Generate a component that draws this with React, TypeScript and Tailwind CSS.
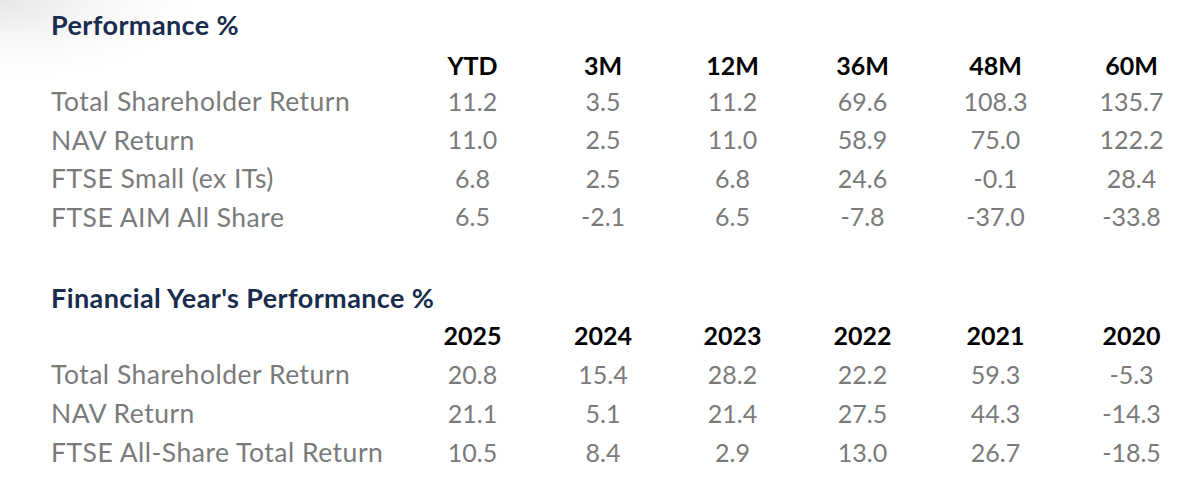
const COLS = "grid grid-cols-[356px_131px_130px_129px_131px_135px_137px] items-center";

type Section = {
  title: string;
  headers: string[];
  rows: [string, string[]][];
};

const PERFORMANCE: Section = {
  title: "Performance %",
  headers: ["YTD", "3M", "12M", "36M", "48M", "60M"],
  rows: [
    ["Total Shareholder Return", ["11.2", "3.5", "11.2", "69.6", "108.3", "135.7"]],
    ["NAV Return", ["11.0", "2.5", "11.0", "58.9", "75.0", "122.2"]],
    ["FTSE Small (ex ITs)", ["6.8", "2.5", "6.8", "24.6", "-0.1", "28.4"]],
    ["FTSE AIM All Share", ["6.5", "-2.1", "6.5", "-7.8", "-37.0", "-33.8"]],
  ],
};

const FINANCIAL_YEARS: Section = {
  title: "Financial Year's Performance %",
  headers: ["2025", "2024", "2023", "2022", "2021", "2020"],
  rows: [
    ["Total Shareholder Return", ["20.8", "15.4", "28.2", "22.2", "59.3", "-5.3"]],
    ["NAV Return", ["21.1", "5.1", "21.4", "27.5", "44.3", "-14.3"]],
    ["FTSE All-Share Total Return", ["10.5", "8.4", "2.9", "13.0", "26.7", "-18.5"]],
  ],
};

function PerfTable({
  section,
  titleClass,
  headerClass,
  rowClass,
}: {
  section: Section;
  titleClass: string;
  headerClass: string;
  rowClass: string;
}) {
  return (
    <div className="flex flex-col">
      {/* Section title */}
      <div
        className={`flex items-center text-[27px] font-bold leading-none tracking-[0.4px] text-[#1a2c4e] ${titleClass}`}
      >
        {section.title}
      </div>

      {/* Column headers */}
      <div className={`${COLS} text-[25px] font-bold leading-none text-black ${headerClass}`}>
        <div />
        {section.headers.map((h) => (
          <div key={h} className="text-center">
            {h}
          </div>
        ))}
      </div>

      {/* Data rows */}
      {section.rows.map(([label, values]) => (
        <div key={label} className={`${COLS} text-[25px] leading-none text-[#7a7a7a] ${rowClass}`}>
          <div className="text-[26.5px] tracking-[0.5px]">{label}</div>
          {values.map((v, i) => (
            <div key={i} className="text-center">
              {v}
            </div>
          ))}
        </div>
      ))}
    </div>
  );
}

export default function App() {
  return (
    <div className="h-[485px] w-[1200px] overflow-hidden bg-white bg-[radial-gradient(ellipse_at_top_left,#e6e6e6_0%,#f5f5f5_5%,#ffffff_11%)] pl-[51px] pt-[4px] font-['Lato','Liberation_Sans',sans-serif]">
      <PerfTable
        section={PERFORMANCE}
        titleClass="h-[40px]"
        headerClass="mt-[4px] h-[34px]"
        rowClass="h-[38.5px]"
      />
      <div className="mt-[41.5px]">
        <PerfTable
          section={FINANCIAL_YEARS}
          titleClass="h-[39px]"
          headerClass="h-[38px]"
          rowClass="h-[39px]"
        />
      </div>
    </div>
  );
}
